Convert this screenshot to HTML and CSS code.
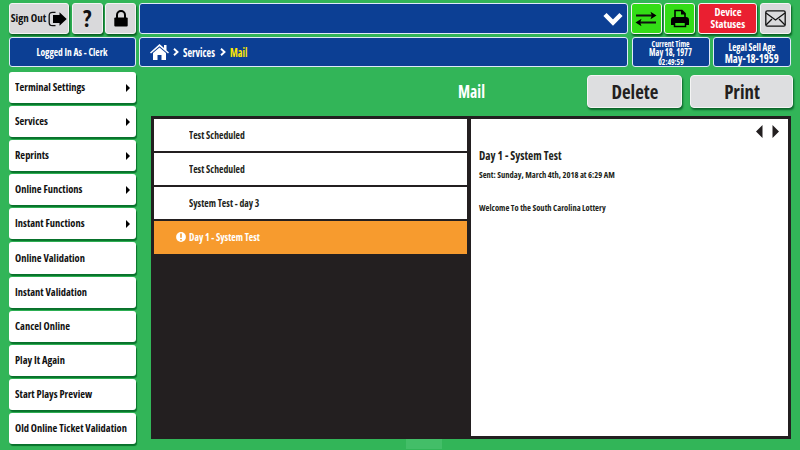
FILE: index.html
```html
<!DOCTYPE html>
<html lang="en">
<head>
<meta charset="utf-8">
<title>Mail</title>
<link rel="stylesheet" href="styles.css">
</head>
<body>
<header class="top">
  <div class="btn"><span class="t signout">Sign Out</span>
    <svg class="exit" width="19" height="16" viewBox="0 0 19 16"><path d="M7.500 1.300H4.500Q1.200 1.300 1.200 4.500v7Q1.200 14.700 4.500 14.700h3" fill="none" stroke="#111" stroke-width="1.300"/><path d="M5 4h6.500V1.200L18.700 8l-7.200 6.800V12H5z"/></svg>
  </div>
  <div class="btn"><span class="t question">?</span></div>
  <div class="btn"><svg width="14" height="17" viewBox="0 0 14 17"><path d="M3 8V5a4 4 0 0 1 8 0v3" fill="none" stroke="#000" stroke-width="2"/><rect x=".3" y="7.500" width="13.400" height="9" rx="1"/></svg></div>
  <div class="blue select"><svg width="20" height="14" viewBox="0 0 20 14"><path d="M2 2.500l8 8 8-8" fill="none" stroke="#fff" stroke-width="4.500"/></svg></div>
  <div class="btn lime"><svg width="22" height="16" viewBox="0 0 22 16"><path d="M1 4.500h17M4 11.500h17" stroke="#111" stroke-width="1.800"/><path d="M15.500 .8l6 3.700-6 3.700 1.300-3.700zM6.500 7.800l-6 3.700 6 3.700-1.300-3.700z"/></svg></div>
  <div class="btn lime"><svg width="20" height="19" viewBox="0 0 20 19"><path d="M5 9V1.500h7l3 3V9" fill="none" stroke="#000" stroke-width="1.600"/><path d="M11 1v4.500h4.500M4 8h12q3 0 3 3v5h-3.500v-3h-11v3H1v-5q0-3 3-3z"/><path d="M4.500 13.300h11v4.200h-11z" fill="#33dd16" stroke="#000" stroke-width="1.500"/></svg></div>
  <div class="btn red"><span class="t">Device</span><span class="t">Statuses</span></div>
  <div class="btn"><svg width="21" height="17" viewBox="0 0 21 17" fill="none" stroke="#111" stroke-width="1.300"><rect x=".8" y=".8" width="19.400" height="15.400" rx="1.500"/><path d="M1 3l9.500 7L20 3M1 15l6-6M20 15l-6-6"/></svg></div>
</header>
<div class="info">
  <div class="blue"><span class="t user">Logged In As - Clerk</span></div>
  <div class="blue crumbs">
    <svg width="19" height="16" viewBox="0 0 19 16" fill="#fff"><path d="M9.500 0L14 4V1h2.500v5.200L19 8.500l-1 1L9.500 2.300 1 9.500l-1-1z"/><path d="M9.500 3.600L16 9v7h-4.500v-5h-4v5H3V9z"/></svg>
    <svg width="6" height="8" viewBox="0 0 6 8"><path d="M1 .8L4.500 4 1 7.200" fill="none" stroke="#fff" stroke-width="1.900"/></svg>
    <span class="t services">Services</span>
    <svg width="6" height="8" viewBox="0 0 6 8"><path d="M1 .8L4.500 4 1 7.200" fill="none" stroke="#fff" stroke-width="1.900"/></svg>
    <span class="t current">Mail</span>
  </div>
  <div class="blue clock"><span class="t now">Current Time</span><span class="t date">May 18, 1977</span><span class="t time">02:49:59</span></div>
  <div class="blue age"><span class="t legal">Legal Sell Age</span><span class="t big">May-18-1959</span></div>
</div>
<div class="body">
  <nav class="menu">
    <a class="sub"><span class="t">Terminal Settings</span></a>
    <a class="sub"><span class="t">Services</span></a>
    <a class="sub"><span class="t">Reprints</span></a>
    <a class="sub"><span class="t">Online Functions</span></a>
    <a class="sub"><span class="t">Instant Functions</span></a>
    <a><span class="t">Online Validation</span></a>
    <a><span class="t">Instant Validation</span></a>
    <a><span class="t">Cancel Online</span></a>
    <a><span class="t">Play It Again</span></a>
    <a><span class="t">Start Plays Preview</span></a>
    <a><span class="t">Old Online Ticket Validation</span></a>
  </nav>
  <main>
    <div class="heading"><h1 class="t">Mail</h1><button><span class="t">Delete</span></button><button><span class="t">Print</span></button></div>
    <section class="panel">
      <div class="list">
        <div class="row"><span class="t">Test Scheduled</span></div>
        <div class="row"><span class="t">Test Scheduled</span></div>
        <div class="row"><span class="t">System Test - day 3</span></div>
        <div class="row active"><svg width="10" height="10" viewBox="0 0 10 10"><circle cx="5" cy="5" r="4.900" fill="#fff"/><path d="M5 1.500v4.200M5 7v1.500" stroke="#f79b2e" stroke-width="1.600"/></svg><span class="t">Day 1 - System Test</span></div>
      </div>
      <article>
        <div class="pager"><svg width="23" height="13" viewBox="0 0 23 13" fill="#231f20"><path d="M6.500 0v13L0 6.500zM16.500 0v13L23 6.500z"/></svg></div>
        <h2 class="t">Day 1 - System Test</h2>
        <p class="t sent">Sent: Sunday, March 4th, 2018 at 6:29 AM</p>
        <p class="t message">Welcome To the South Carolina Lottery</p>
      </article>
    </section>
    <div class="foot"></div>
  </main>
</div>
</body>
</html>
```
FILE: styles.css
```css
* { box-sizing: border-box; }
body {
  margin: 0;
  width: 800px;
  height: 450px;
  overflow: hidden;
  padding: 3px 8px 0 9px;
  background: #32b558;
  color: #111;
  font-family: "Open Sans", "Noto Sans", sans-serif;
  font-stretch: 75%;
  font-weight: 700;
  font-size: 11px;
  line-height: 14px;
}
svg { display: block; flex: none; }
h1, h2, p { margin: 0; font-weight: 700; }
.t { white-space: nowrap; display: block; flex: none; transform-origin: left; }
.top { display: grid; grid-template-columns: 60px 31px 31px 489px 31px 31px 59px 31px; column-gap: 2.700px; height: 31px; }
.btn {
  display: flex; align-items: center; justify-content: center;
  background: #d9d9db; border: 1px solid #f4f4f4; border-radius: 3px;
  box-shadow: 1px 2px 2px #075f22;
}
.blue {
  display: flex; align-items: center; justify-content: center;
  background: #0c3f94; border: 1px solid #dfe9fa; border-radius: 3px; color: #fff;
}
.exit { margin-left: 2px; }
.signout { margin-bottom: 1px; }
.question { font-size: 23px; transform: translateY(-1px); }
.select { justify-content: flex-end; padding-right: 4px; }
.lime { background: #33dd16; }
.red { background: #ea1f31; color: #fff; flex-direction: column; line-height: 12px; padding-bottom: 2px; }
.red .t { transform: scaleX(.97); transform-origin: center; }
.info { display: grid; grid-template-columns: 127px 489px 78px 78px; column-gap: 3.300px; height: 30px; margin-top: 3px; }
.user { transform: scaleX(.865); transform-origin: center; }
.crumbs { justify-content: flex-start; padding-left: 10px; gap: 4px; }
.crumbs .t { padding-top: 2px; font-size: 11.500px; }
.services { transform: scaleX(.88); margin-right: -4px; }
.current { color: #ffe800; transform: scaleX(.88); }
.clock { flex-direction: column; font-size: 9px; line-height: 9px; }
.clock .t, .age .t { transform-origin: center; }
.now { transform: scaleX(.84); }
.date { font-size: 10px; transform: scaleX(.84); }
.time { transform: scaleX(.85); }
.age { flex-direction: column; font-size: 10px; line-height: 12px; padding-top: 1px; }
.legal { transform: scaleX(.9); }
.big { font-size: 12px; transform: scaleX(.88); }
.body { display: flex; padding-top: 5px; }
.menu { width: 127px; display: flex; flex-direction: column; gap: 3px; }
.menu a {
  height: 31.100px; background: #fff; border-radius: 3px; padding: 0 6px;
  display: flex; align-items: center; box-shadow: 1px 2px 1px #08712b;
}
.menu .t { transform: scaleX(.95); margin-bottom: 1px; }
.sub::after { content: ""; margin-left: auto; border: solid transparent; border-width: 4px 0 4px 4px; border-left-color: #000; }
main { width: 642px; margin-left: 15px; padding-top: 1px; }
.heading { height: 43px; display: flex; padding-top: 2px; }
.heading h1 { width: 35px; margin: 7px 94px 0 307px; font-size: 17px; line-height: 20px; color: #fff; transform: scaleX(.92); }
button {
  width: 95px; height: 33px; margin-right: 8px; padding: 0; flex: none;
  display: flex; align-items: center; justify-content: center;
  font: inherit; font-size: 20px; color: #231f20; background: #dddee0;
  border: 1px solid #f4f4f4; border-radius: 4px; box-shadow: 1px 2px 2px #0b652a;
}
button .t { transform: scaleX(.94); transform-origin: center; }
button + button { width: 103px; margin: 0; }
.panel { width: 640px; height: 323px; background: #231f20; padding: 3px 3px; display: flex; gap: 4px; font-size: 10px; color: #231f20; }
.list { width: 313px; display: flex; flex-direction: column; gap: 2px; }
.row { height: 32px; background: #fff; display: flex; align-items: center; padding-left: 35px; }
.row .t { transform: scaleX(.97); }
.active { background: #f79b2e; color: #fff; padding: 0 0 1px 22px; gap: 3px; height: 33px; }
article { width: 317px; background: #fff; padding: 6px 0 0 8px; }
.pager { padding-left: 277px; height: 23px; }
h2 { font-size: 12px; line-height: 16px; transform: scaleX(.94); }
.sent, .message { font-size: 8.500px; line-height: 12px; }
.sent { margin-top: 5px; }
.message { margin-top: 21px; }
.foot { width: 36px; height: 10px; margin-left: 255px; background: #43be68; }
```
